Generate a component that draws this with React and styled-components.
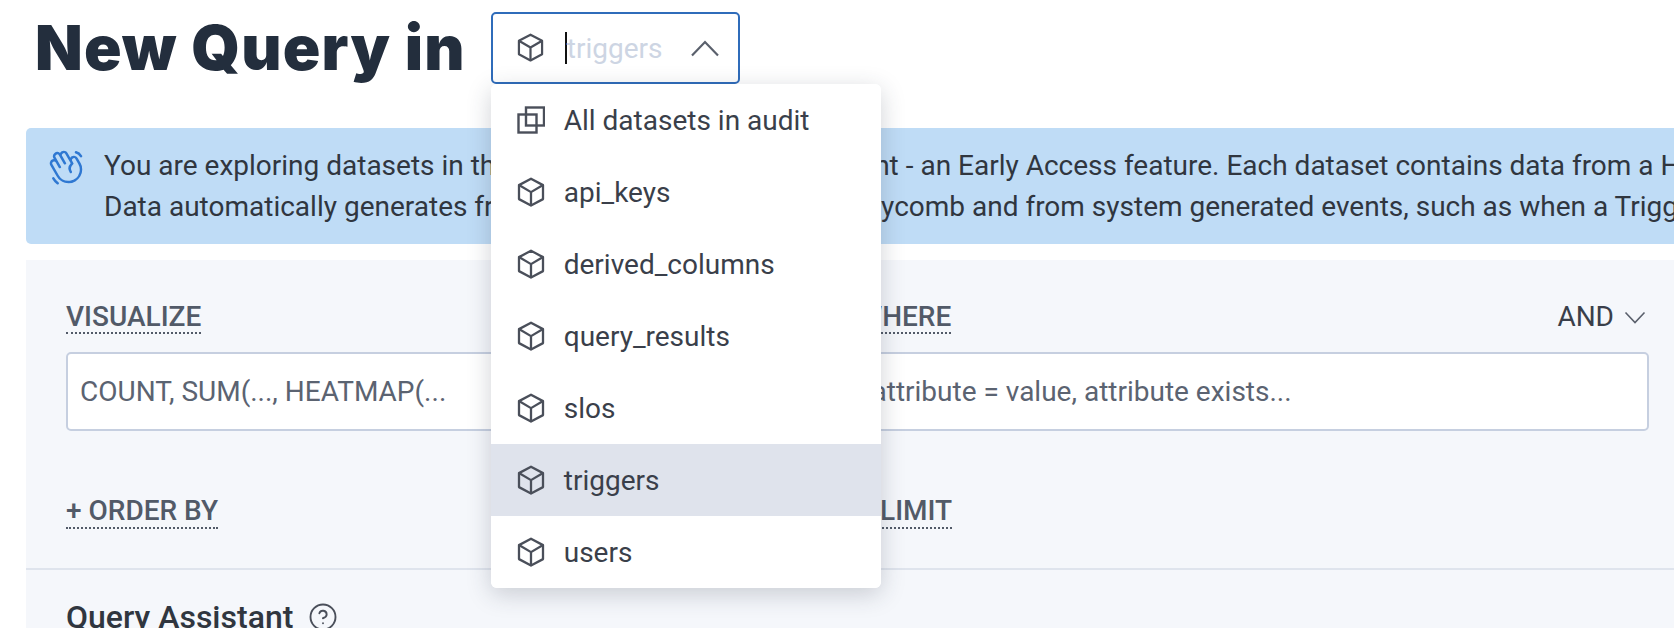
import React from 'react';
import styled, { createGlobalStyle } from 'styled-components';
import { CircleHelp } from 'lucide-react';
import { PiHandWaving } from 'react-icons/pi';

const GlobalStyle = createGlobalStyle`
  html, body {
    margin: 0;
    height: 100%;
    overflow: hidden;
    background: #fff;
    font-family: Roboto, "Liberation Sans", sans-serif;
  }
`;

const datasets = ['api_keys', 'derived_columns', 'query_results', 'slos', 'triggers', 'users'];

const CubeIcon = ({ size = 28, color = '#4a4f5a' }) => (
  <svg width={size} height={size * 1.08} viewBox="0 0 28 30" fill="none" stroke={color} strokeWidth="2.3" strokeLinejoin="round" strokeLinecap="round">
    <path d="M14 1.6 26 8v14L14 28.4 2 22V8Z" />
    <path d="M2.4 8.2 14 15l11.6-6.8M14 15v13" />
  </svg>
);

const StackIcon = () => (
  <svg width="28" height="28" viewBox="0 0 28 28" fill="none" stroke="#4a4f5a" strokeWidth="2.4">
    <rect x="9" y="1.5" width="18" height="18" />
    <rect x="1.5" y="8.5" width="18" height="18" />
  </svg>
);

export default function App() {
  return (
    <Page>
      <GlobalStyle />
      <Header>
        <Title>New Query in</Title>
        <SelectWrap>
          <Select>
            <CubeIcon size={27} />
            <Caret />
            <SelectText>triggers</SelectText>
            <svg width="30" height="17" viewBox="0 0 30 17" fill="none" stroke="#5a606c" strokeWidth="2.2">
              <path d="M2 15.5 15 2l13 13.5" />
            </svg>
          </Select>
          <Menu>
            <MenuItem>
              <IconSlot><StackIcon /></IconSlot>
              All datasets in audit
            </MenuItem>
            {datasets.map((name) => (
              <MenuItem key={name} $active={name === 'triggers'}>
                <IconSlot><CubeIcon /></IconSlot>
                {name}
              </MenuItem>
            ))}
          </Menu>
        </SelectWrap>
      </Header>

      <Banner>
        <WaveIcon><PiHandWaving size={40} /></WaveIcon>
        <BannerText>
          <div>You are exploring datasets in the Honeycomb audit environment - an Early Access feature. Each dataset contains data from a Honeycomb team.</div>
          <div>Data automatically generates from all user activity within Honeycomb and from system generated events, such as when a Trigger fires.</div>
        </BannerText>
      </Banner>

      <Panel>
        <Clauses>
          <Clause>
            <ClauseHead><ClauseLabel>VISUALIZE</ClauseLabel></ClauseHead>
            <ClauseInput>COUNT, SUM(..., HEATMAP(...</ClauseInput>
          </Clause>
          <Clause>
            <ClauseHead>
              <ClauseLabel>WHERE</ClauseLabel>
              <AndToggle>
                AND
                <svg width="22" height="13" viewBox="0 0 22 13" fill="none" stroke="#5a606c" strokeWidth="1.6">
                  <path d="M1.5 1.5 11 11.5l9.5-10" />
                </svg>
              </AndToggle>
            </ClauseHead>
            <ClauseInput>attribute = value, attribute exists...</ClauseInput>
          </Clause>
          <ClauseLabelRow><ClauseLabel>+ ORDER BY</ClauseLabel></ClauseLabelRow>
          <ClauseLabelRow><ClauseLabel>+ LIMIT</ClauseLabel></ClauseLabelRow>
        </Clauses>
        <Assistant>
          <AssistantTitle>Query Assistant</AssistantTitle>
          <CircleHelp size={30} strokeWidth={1.5} color="#4a4f5a" />
        </Assistant>
      </Panel>
    </Page>
  );
}

const Page = styled.div`
  width: 1674px;
  height: 628px;
  overflow: hidden;
`;

const Header = styled.header`
  display: flex;
  align-items: center;
  gap: 25px;
  padding: 12px 0 0 35px;
`;

const Title = styled.h1`
  margin: 0;
  font-family: Inter, sans-serif;
  font-size: 62px;
  font-weight: 900;
  letter-spacing: 1.2px;
  line-height: 72px;
  color: #232e3d;
  white-space: nowrap;
`;

const SelectWrap = styled.div`
  position: relative;
  width: 249px;
`;

const Select = styled.div`
  box-sizing: border-box;
  height: 72px;
  display: flex;
  align-items: center;
  padding: 0 18px 0 24px;
  border: 2px solid #2f6cba;
  border-radius: 5px;
  background: #fff;
`;

const Caret = styled.span`
  width: 2px;
  height: 32px;
  margin-left: 21px;
  background: #111;
`;

const SelectText = styled.span`
  flex: 1;
  font-size: 28px;
  color: #cdd5e3;
`;

const Menu = styled.div`
  position: absolute;
  z-index: 5;
  top: 72px;
  left: 0;
  width: 390px;
  background: #fff;
  border-radius: 6px;
  box-shadow: 0 6px 24px rgba(40, 50, 70, 0.22);
  overflow: hidden;
`;

const MenuItem = styled.div`
  height: 72px;
  display: flex;
  align-items: center;
  padding-left: 26px;
  font-size: 28px;
  color: #3a3f4a;
  background: ${(p) => (p.$active ? '#dfe3ec' : '#fff')};
`;

const IconSlot = styled.span`
  width: 47px;
  display: flex;
  align-items: center;
`;

const Banner = styled.section`
  height: 116px;
  margin: 44px 0 16px 26px;
  padding-left: 20px;
  display: flex;
  align-items: center;
  gap: 18px;
  background: #bfdcf6;
  border-radius: 5px 0 0 5px;
`;

const WaveIcon = styled.span`
  display: flex;
  color: #2f78d2;
  margin-top: -38px;
`;

const BannerText = styled.div`
  font-size: 28px;
  line-height: 41px;
  color: #30363f;
  white-space: nowrap;
`;

const Panel = styled.section`
  margin-left: 26px;
  height: 368px;
  background: #f5f7fb;
`;

const Clauses = styled.div`
  display: grid;
  grid-template-columns: 1fr 1fr;
  padding: 42px 25px 0 40px;
  height: 310px;
  box-sizing: border-box;
  border-bottom: 2px solid #dfe4ed;
  align-content: start;
`;

const Clause = styled.div`
  display: flex;
  flex-direction: column;
  gap: 17px;
`;

const ClauseHead = styled.div`
  height: 33px;
  display: flex;
  justify-content: space-between;
  align-items: flex-start;
`;

const ClauseLabel = styled.span`
  font-size: 28px;
  font-weight: 500;
  line-height: 30px;
  color: #525a68;
  border-bottom: 2px dotted #525a68;
`;

const AndToggle = styled.span`
  display: flex;
  align-items: center;
  gap: 10px;
  padding-right: 3px;
  font-size: 28px;
  line-height: 30px;
  color: #3a3f4a;
`;

const ClauseInput = styled.div`
  box-sizing: border-box;
  height: 79px;
  display: flex;
  align-items: center;
  padding-left: 12px;
  background: #fff;
  border: 2px solid #c6cfe0;
  border-radius: 5px;
  font-size: 28px;
  color: #5b6371;
`;

const ClauseLabelRow = styled.div`
  margin-top: 65px;
`;

const Assistant = styled.div`
  display: flex;
  align-items: center;
  gap: 15px;
  padding: 31px 0 0 40px;
`;

const AssistantTitle = styled.h2`
  margin: 0;
  font-size: 32px;
  font-weight: 500;
  line-height: 32px;
  color: #30363f;
`;
